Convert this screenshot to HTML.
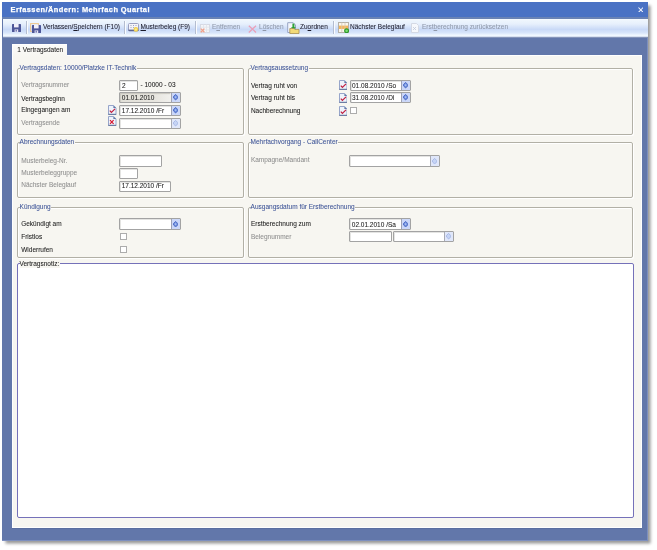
<!DOCTYPE html>
<html><head><meta charset="utf-8">
<style>
*{margin:0;padding:0;box-sizing:border-box}
html,body{width:657px;height:550px;overflow:hidden;background:#fff;font-family:"Liberation Sans",sans-serif}
.a{position:absolute}
.t{position:absolute;white-space:nowrap;font-size:6.5px;line-height:8px;color:#1a1a1a;-webkit-text-stroke:0.06px currentColor}
#root{position:absolute;left:0;top:0;width:657px;height:550px;will-change:transform}
.g{color:#8e8e8e}
.gt{color:#3d5497}
.gtitle{background:#f7f6f1;padding-right:0.6px}
.tb{color:#1a1a2a;font-size:6.5px}
u{text-decoration-thickness:0.5px;text-underline-offset:0.8px}
.dis{color:#8f98aa}
.grp{position:absolute;border:1px solid #b2b0a6;box-shadow:1px 1px 0 #fff, inset 1px 1px 0 #fff;border-radius:2px}
.box{position:absolute;background:#fff;border:1px solid #a3a3a3;border-radius:1px;box-shadow:inset 1px 1px 0 #e4e4e2}
.spin{position:absolute;top:0;bottom:0;right:0;width:9.5px}
.sdis{background:#e6ecfa;border-left-color:#d0d8ee}
.chk{position:absolute;background:#fff;border:1px solid #acacac;width:7px;height:7px}
</style></head><body><div id="root">

<div class="a" style="left:2px;top:2px;width:646px;height:538.5px;background:#6277aa;box-shadow:2.5px 2.5px 3px rgba(0,0,0,0.42);border-right:1px solid #7d8fbe;border-bottom:1px solid #7d8fbe"></div>
<div class="a" style="left:2px;top:2px;width:646px;height:15px;background:#4a72c4"></div>
<div class="a" style="left:2px;top:17px;width:646px;height:1.5px;background:#6a83b5"></div>
<div class="t " style="left:10.60px;top:5.54px;font-size:7.4px;line-height:8px;font-weight:bold;color:#fff;letter-spacing:0.45px;-webkit-text-stroke:0.25px #fff">Erfassen/Ändern: Mehrfach Quartal</div>
<svg class="a" style="left:637.9px;top:6.5px" width="5.6" height="5.8" viewBox="0 0 5.6 5.8"><path d="M0.5 0.5 L5.1 5.3 M5.1 0.5 L0.5 5.3" stroke="#f4f8ff" stroke-width="1.05"/></svg>
<div class="a" style="left:3px;top:18.5px;width:645px;height:19.0px;background:linear-gradient(180deg,#f8fbff 0%,#eef5fd 8%,#e6effc 27%,#c9d9f7 55%,#d8e5fa 73%,#f2f9ff 86%,#e8f0fb 91%,#9aa8c8 96%,#5a6c9c 100%)"></div>
<div class="t tb" style="left:43.00px;top:23.35px;">Verlassen/<u>S</u>peichern (F10)</div>
<div class="t tb" style="left:140.50px;top:23.35px;"><u>M</u>usterbeleg (F9)</div>
<div class="t tb dis" style="left:212.00px;top:23.35px;">E<u>n</u>tfernen</div>
<div class="t tb dis" style="left:259.00px;top:23.35px;">L<u>ö</u>schen</div>
<div class="t tb" style="left:300.00px;top:23.35px;">Zu<u>o</u>rdnen</div>
<div class="t tb" style="left:350.00px;top:23.35px;">Nächster Beleglauf</div>
<div class="t tb dis" style="left:422.00px;top:23.35px;">Erst<u>b</u>erechnung zurücksetzen</div>
<div class="a" style="left:26px;top:20.5px;width:1px;height:13.0px;background:#b4bdd0;box-shadow:1px 0 0 #fafcff"></div>
<div class="a" style="left:124px;top:20.5px;width:1px;height:13.0px;background:#b4bdd0;box-shadow:1px 0 0 #fafcff"></div>
<div class="a" style="left:195px;top:20.5px;width:1px;height:13.0px;background:#b4bdd0;box-shadow:1px 0 0 #fafcff"></div>
<div class="a" style="left:333px;top:20.5px;width:1px;height:13.0px;background:#b4bdd0;box-shadow:1px 0 0 #fafcff"></div>
<svg class="a" style="left:12px;top:23.6px;" width="9" height="8" viewBox="0 0 9 8"><rect x="0" y="0" width="9" height="8" rx="0.6" fill="#4d5698"/><rect x="2" y="0" width="4.6" height="3.4" fill="#f2f0fa"/><rect x="2.6" y="5.4" width="3.6" height="2.6" fill="#e8e6f4"/><rect x="3.6" y="5.8" width="1.2" height="1.8" fill="#5560a8"/></svg>
<svg class="a" style="left:30px;top:22.8px;" width="9" height="9" viewBox="0 0 9 9"><rect x="0.6" y="0.6" width="7.8" height="7.8" fill="none" stroke="#eec58c" stroke-width="1"/></svg>
<svg class="a" style="left:32.2px;top:24.6px;" width="9" height="8" viewBox="0 0 9 8"><rect x="0" y="0" width="9" height="8" rx="0.6" fill="#4d5698"/><rect x="2" y="0" width="4.6" height="3.4" fill="#f2f0fa"/><rect x="2.6" y="5.4" width="3.6" height="2.6" fill="#e8e6f4"/><rect x="3.6" y="5.8" width="1.2" height="1.8" fill="#5560a8"/></svg>
<svg class="a" style="left:128.2px;top:23.4px;" width="11" height="9" viewBox="0 0 11 9"><rect x="0.5" y="0.5" width="10" height="7.5" rx="1" fill="#f4f4fa" stroke="#9aa0c0" stroke-width="1"/><rect x="0.5" y="6.6" width="10" height="1.4" fill="#5f6690"/><path d="M2.5 2.5h1M5 2.5h1M7.5 2.5h1M2.5 4.6h1M5 4.6h1" stroke="#9ba3bf" stroke-width="1"/><circle cx="7.9" cy="6.4" r="2.3" fill="#f0cf4a"/><circle cx="7.9" cy="6.4" r="1.2" fill="#fde98a"/></svg>
<svg class="a" style="left:200px;top:24px;" width="10" height="9" viewBox="0 0 10 9"><rect x="0.5" y="0.5" width="9" height="8" fill="#f4f6fa" stroke="#d6dae4" stroke-width="1"/><path d="M3.5 0.5v8M6.5 0.5v8M0.5 3.2h9M0.5 5.9h9" stroke="#dfe3ea" stroke-width="0.8"/><path d="M0.8 4.6l3.6 3.6M4.4 4.6l-3.6 3.6" stroke="#f0a08a" stroke-width="1.3"/></svg>
<svg class="a" style="left:247.6px;top:24.6px;" width="9" height="8" viewBox="0 0 9 8"><path d="M0.8 0.8l7.2 6.6M8 0.8l-7.2 6.6" stroke="#eaa0b8" stroke-width="1.3"/></svg>
<svg class="a" style="left:286.8px;top:21.8px;" width="13" height="12" viewBox="0 0 13 12"><path d="M0.7 0.7h5.5l2.3 2.3v7.5h-7.8z" fill="#f2f5fb" stroke="#98a4c4" stroke-width="1"/><path d="M6.4 1.6v5.2" stroke="#2fa43a" stroke-width="2"/><path d="M4 5.2l2.4 2.6 2.4-2.6z" fill="#1f9a2c"/><path d="M2.8 6.5h4l0.8 0.9h4.4v4.1h-9.2z" fill="#f2da78" stroke="#a89050" stroke-width="0.8"/></svg>
<svg class="a" style="left:337.5px;top:22px;" width="11.5" height="11" viewBox="0 0 11.5 11"><rect x="0.5" y="0.5" width="10" height="10" fill="#faf6ee" stroke="#b4b0a8" stroke-width="1"/><rect x="1" y="3.6" width="9" height="3.4" fill="#f3b65c"/><path d="M3.8 0.5v10M7 0.5v10" stroke="#d2c8b8" stroke-width="0.8"/><circle cx="8.6" cy="8.7" r="2.5" fill="#2e9a2c"/><circle cx="8.6" cy="8.7" r="1.3" fill="#7ee070"/></svg>
<svg class="a" style="left:410.8px;top:23px;" width="8" height="10" viewBox="0 0 8 10"><path d="M0.5 0.5h5l2 2v7h-7z" fill="#f6f8fc" stroke="#d4d9e4" stroke-width="1"/><path d="M2 4l3 3M2 7l3-3" stroke="#c0c8d8" stroke-width="0.8"/></svg>
<div class="a" style="left:12px;top:55px;width:630px;height:473.29999999999995px;background:#f7f6f1;border-left:1px solid #fff;border-top:1px solid #fff;border-right:1px solid #fff;border-bottom:1px solid #fff;box-shadow:0 0.6px 0 #566a9a"></div>
<div class="a" style="left:12px;top:44px;width:55px;height:13px;background:linear-gradient(180deg,#fbfbf9,#f7f6f1);border-top:1px solid #fff;border-left:1px solid #fff"></div>
<div class="t " style="left:17.30px;top:46.25px;">1 Vertragsdaten</div>
<div class="grp" style="left:17px;top:68px;width:227px;height:67px"></div>
<div class="t gt gtitle" style="left:19.60px;top:64.35px">Vertragsdaten: 10000/Platzke IT-Technik</div>
<div class="grp" style="left:248px;top:68px;width:385px;height:67px"></div>
<div class="t gt gtitle" style="left:250.60px;top:64.35px">Vertragsaussetzung</div>
<div class="grp" style="left:17px;top:142px;width:227px;height:56px"></div>
<div class="t gt gtitle" style="left:19.60px;top:138.05px">Abrechnungsdaten</div>
<div class="grp" style="left:248px;top:142px;width:385px;height:56px"></div>
<div class="t gt gtitle" style="left:250.60px;top:137.85px">Mehrfachvorgang - CallCenter</div>
<div class="grp" style="left:17px;top:207px;width:227px;height:51px"></div>
<div class="t gt gtitle" style="left:19.60px;top:202.95px">Kündigung</div>
<div class="grp" style="left:248px;top:207px;width:385px;height:51px"></div>
<div class="t gt gtitle" style="left:250.60px;top:202.95px">Ausgangsdatum für Erstberechnung</div>
<div class="t g" style="left:21.20px;top:80.75px;">Vertragsnummer</div>
<div class="t " style="left:21.20px;top:94.55px;">Vertragsbeginn</div>
<div class="t " style="left:21.20px;top:106.35px;">Eingegangen am</div>
<div class="t g" style="left:21.20px;top:118.75px;">Vertragsende</div>
<div class="box" style="left:119px;top:80px;width:19px;height:11px;"></div>
<div class="t " style="left:122.00px;top:82.25px;">2</div>
<div class="t " style="left:140.50px;top:81.05px;">- 10000 - 03</div>
<div class="box" style="left:119px;top:92px;width:62px;height:11px;background:linear-gradient(90deg,#e2e0d8,#e8e6e0 60%,#f6f6f4);"><div class="spin" style="background:#cbd7f8;border-left:1.3px solid #9ea2b4"><svg width="5.2" height="6.4" viewBox="0 0 5.2 6.4" style="position:absolute;left:1.5px;top:1.30px"><path d="M2.6 0.4 L4.7 2.5 V3.9 L2.6 6.0 L0.5 3.9 V2.5 Z" fill="#6f8fdc" stroke="#4060c0" stroke-width="0.85"/><path d="M2.6 2.1 L3.5 2.9 V3.5 L2.6 4.3 L1.7 3.5 V2.9Z" fill="#a8c0f2"/></svg></div></div>
<div class="a" style="left:120px;top:93px;width:50px;height:9px;box-shadow:inset 1px 1px 1px #c8c6bf"></div>
<div class="t " style="left:121.80px;top:93.95px;">01.01.2010</div>
<div class="box" style="left:119px;top:105px;width:62px;height:11px;"><div class="spin" style="background:#cbd7f8;border-left:1.3px solid #9ea2b4"><svg width="5.2" height="6.4" viewBox="0 0 5.2 6.4" style="position:absolute;left:1.5px;top:1.30px"><path d="M2.6 0.4 L4.7 2.5 V3.9 L2.6 6.0 L0.5 3.9 V2.5 Z" fill="#6f8fdc" stroke="#4060c0" stroke-width="0.85"/><path d="M2.6 2.1 L3.5 2.9 V3.5 L2.6 4.3 L1.7 3.5 V2.9Z" fill="#a8c0f2"/></svg></div></div>
<div class="t " style="left:121.80px;top:106.55px;">17.12.2010 /Fr</div>
<div class="box" style="left:119px;top:118px;width:62px;height:11px;"><div class="spin" style="background:#e0e7fa;border-left:1.3px solid #a8aab4"><svg width="5.2" height="6.4" viewBox="0 0 5.2 6.4" style="position:absolute;left:1.5px;top:1.30px"><path d="M2.6 0.4 L4.7 2.5 V3.9 L2.6 6.0 L0.5 3.9 V2.5 Z" fill="#c6d4f5" stroke="#9fb2e4" stroke-width="0.85"/></svg></div></div>
<svg class="a" style="left:108.3px;top:105.3px" width="8.5" height="10" viewBox="0 0 8.5 10"><path d="M0.5 0.5 H5.6 L8 2.9 V9.5 H0.5 Z" fill="#eef3fb" stroke="#8c9cc4" stroke-width="0.9"/><path d="M5.4 0.4 L8.1 3.1 H5.4Z" fill="#5f7aa8"/><path d="M0.3 8.8 H8.2 V9.8 H0.3Z" fill="#62749a"/><path d="M1.8 5.6 L3.4 7.4 L7 3.8" fill="none" stroke="#c01e40" stroke-width="1.2"/></svg>
<svg class="a" style="left:108.3px;top:116.4px" width="8.5" height="10" viewBox="0 0 8.5 10"><path d="M0.5 0.5 H5.6 L8 2.9 V9.5 H0.5 Z" fill="#eef3fb" stroke="#8c9cc4" stroke-width="0.9"/><path d="M5.4 0.4 L8.1 3.1 H5.4Z" fill="#5f7aa8"/><path d="M0.3 8.8 H8.2 V9.8 H0.3Z" fill="#62749a"/><path d="M2 4.2 L5.6 7.8 M5.6 4.2 L2 7.8" fill="none" stroke="#d81830" stroke-width="1.2"/></svg>
<div class="t " style="left:250.90px;top:81.75px;">Vertrag ruht von</div>
<div class="t " style="left:250.90px;top:94.25px;">Vertrag ruht bis</div>
<div class="t " style="left:250.90px;top:106.75px;">Nachberechnung</div>
<div class="box" style="left:350px;top:80px;width:61px;height:11px;"><div class="spin" style="background:#cbd7f8;border-left:1.3px solid #9ea2b4"><svg width="5.2" height="6.4" viewBox="0 0 5.2 6.4" style="position:absolute;left:1.5px;top:1.30px"><path d="M2.6 0.4 L4.7 2.5 V3.9 L2.6 6.0 L0.5 3.9 V2.5 Z" fill="#6f8fdc" stroke="#4060c0" stroke-width="0.85"/><path d="M2.6 2.1 L3.5 2.9 V3.5 L2.6 4.3 L1.7 3.5 V2.9Z" fill="#a8c0f2"/></svg></div></div>
<div class="t " style="left:352.00px;top:81.75px;">01.08.2010 /So</div>
<div class="box" style="left:350px;top:92px;width:61px;height:11px;"><div class="spin" style="background:#cbd7f8;border-left:1.3px solid #9ea2b4"><svg width="5.2" height="6.4" viewBox="0 0 5.2 6.4" style="position:absolute;left:1.5px;top:1.30px"><path d="M2.6 0.4 L4.7 2.5 V3.9 L2.6 6.0 L0.5 3.9 V2.5 Z" fill="#6f8fdc" stroke="#4060c0" stroke-width="0.85"/><path d="M2.6 2.1 L3.5 2.9 V3.5 L2.6 4.3 L1.7 3.5 V2.9Z" fill="#a8c0f2"/></svg></div></div>
<div class="t " style="left:352.00px;top:94.15px;">31.08.2010 /Di</div>
<svg class="a" style="left:338.8px;top:80.3px" width="8.5" height="10" viewBox="0 0 8.5 10"><path d="M0.5 0.5 H5.6 L8 2.9 V9.5 H0.5 Z" fill="#eef3fb" stroke="#8c9cc4" stroke-width="0.9"/><path d="M5.4 0.4 L8.1 3.1 H5.4Z" fill="#5f7aa8"/><path d="M0.3 8.8 H8.2 V9.8 H0.3Z" fill="#62749a"/><path d="M1.8 5.6 L3.4 7.4 L7 3.8" fill="none" stroke="#c01e40" stroke-width="1.2"/></svg>
<svg class="a" style="left:338.8px;top:92.7px" width="8.5" height="10" viewBox="0 0 8.5 10"><path d="M0.5 0.5 H5.6 L8 2.9 V9.5 H0.5 Z" fill="#eef3fb" stroke="#8c9cc4" stroke-width="0.9"/><path d="M5.4 0.4 L8.1 3.1 H5.4Z" fill="#5f7aa8"/><path d="M0.3 8.8 H8.2 V9.8 H0.3Z" fill="#62749a"/><path d="M1.8 5.6 L3.4 7.4 L7 3.8" fill="none" stroke="#c01e40" stroke-width="1.2"/></svg>
<svg class="a" style="left:338.8px;top:105.5px" width="8.5" height="10" viewBox="0 0 8.5 10"><path d="M0.5 0.5 H5.6 L8 2.9 V9.5 H0.5 Z" fill="#eef3fb" stroke="#8c9cc4" stroke-width="0.9"/><path d="M5.4 0.4 L8.1 3.1 H5.4Z" fill="#5f7aa8"/><path d="M0.3 8.8 H8.2 V9.8 H0.3Z" fill="#62749a"/><path d="M1.8 5.6 L3.4 7.4 L7 3.8" fill="none" stroke="#c01e40" stroke-width="1.2"/></svg>
<div class="chk" style="left:350px;top:107px"></div>
<div class="t g" style="left:21.20px;top:156.85px;">Musterbeleg-Nr.</div>
<div class="t g" style="left:21.20px;top:168.75px;">Musterbeleggruppe</div>
<div class="t g" style="left:21.20px;top:180.85px;">Nächster Beleglauf</div>
<div class="box" style="left:119px;top:155px;width:43px;height:12px;"></div>
<div class="box" style="left:119px;top:168px;width:19px;height:11px;"></div>
<div class="box" style="left:119px;top:181px;width:52px;height:11px;"></div>
<div class="t " style="left:121.70px;top:182.15px;">17.12.2010 /Fr</div>
<div class="t g" style="left:250.90px;top:156.25px;">Kampagne/Mandant</div>
<div class="box" style="left:349px;top:155px;width:91px;height:12px;"><div class="spin" style="background:#e0e7fa;border-left:1.3px solid #a8aab4"><svg width="5.2" height="6.4" viewBox="0 0 5.2 6.4" style="position:absolute;left:1.5px;top:1.80px"><path d="M2.6 0.4 L4.7 2.5 V3.9 L2.6 6.0 L0.5 3.9 V2.5 Z" fill="#c6d4f5" stroke="#9fb2e4" stroke-width="0.85"/></svg></div></div>
<div class="t " style="left:21.20px;top:220.25px;">Gekündigt am</div>
<div class="t " style="left:21.20px;top:232.85px;">Fristlos</div>
<div class="t " style="left:21.20px;top:245.75px;">Widerrufen</div>
<div class="box" style="left:119px;top:218px;width:62px;height:12px;"><div class="spin" style="background:#cbd7f8;border-left:1.3px solid #9ea2b4"><svg width="5.2" height="6.4" viewBox="0 0 5.2 6.4" style="position:absolute;left:1.5px;top:1.80px"><path d="M2.6 0.4 L4.7 2.5 V3.9 L2.6 6.0 L0.5 3.9 V2.5 Z" fill="#6f8fdc" stroke="#4060c0" stroke-width="0.85"/><path d="M2.6 2.1 L3.5 2.9 V3.5 L2.6 4.3 L1.7 3.5 V2.9Z" fill="#a8c0f2"/></svg></div></div>
<div class="chk" style="left:120px;top:233px"></div>
<div class="chk" style="left:120px;top:246px"></div>
<div class="t " style="left:250.90px;top:220.15px;">Erstberechnung zum</div>
<div class="t g" style="left:250.90px;top:232.75px;">Belegnummer</div>
<div class="box" style="left:349px;top:218px;width:62px;height:12px;"><div class="spin" style="background:#cbd7f8;border-left:1.3px solid #9ea2b4"><svg width="5.2" height="6.4" viewBox="0 0 5.2 6.4" style="position:absolute;left:1.5px;top:1.80px"><path d="M2.6 0.4 L4.7 2.5 V3.9 L2.6 6.0 L0.5 3.9 V2.5 Z" fill="#6f8fdc" stroke="#4060c0" stroke-width="0.85"/><path d="M2.6 2.1 L3.5 2.9 V3.5 L2.6 4.3 L1.7 3.5 V2.9Z" fill="#a8c0f2"/></svg></div></div>
<div class="t " style="left:351.80px;top:220.75px;">02.01.2010 /Sa</div>
<div class="box" style="left:349px;top:231px;width:43px;height:11px;"></div>
<div class="box" style="left:393px;top:231px;width:61px;height:11px;"><div class="spin" style="background:#e0e7fa;border-left:1.3px solid #a8aab4"><svg width="5.2" height="6.4" viewBox="0 0 5.2 6.4" style="position:absolute;left:1.5px;top:1.30px"><path d="M2.6 0.4 L4.7 2.5 V3.9 L2.6 6.0 L0.5 3.9 V2.5 Z" fill="#c6d4f5" stroke="#9fb2e4" stroke-width="0.85"/></svg></div></div>
<div class="a" style="left:17px;top:263px;width:617px;height:254.5px;background:#fff;border:1.3px solid #7571b9;border-radius:2px"></div>
<div class="t " style="left:19.50px;top:259.55px;background:#f7f6f1;padding-right:0.8px">Vertragsnotiz:</div>
</div></body></html>
